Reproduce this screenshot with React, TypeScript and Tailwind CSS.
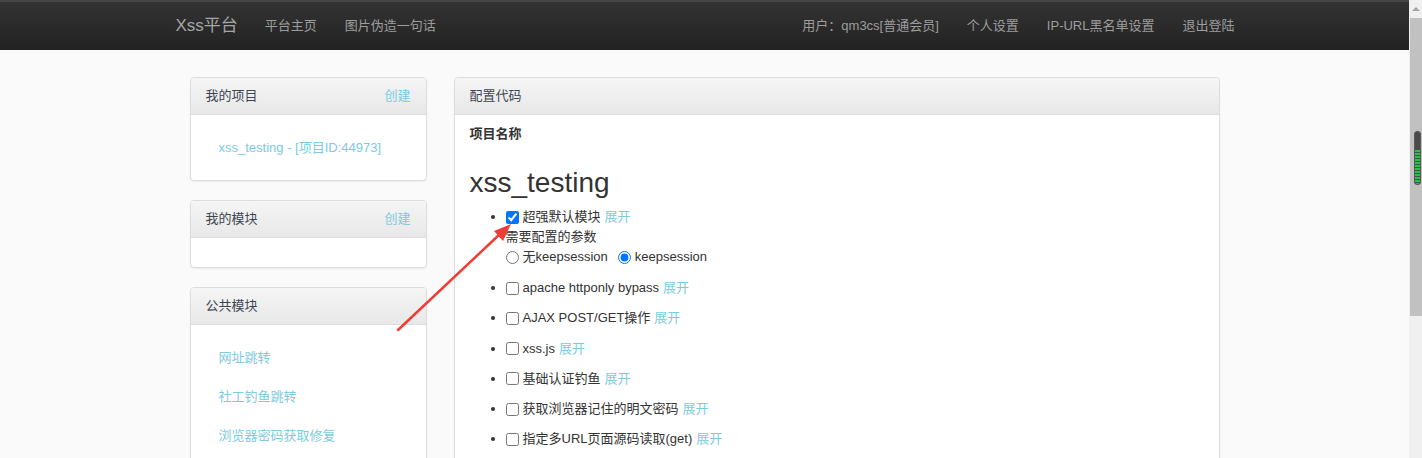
import React from "react";

const FONT = '"Liberation Sans", "Noto Sans CJK SC", sans-serif';

function Panel({ title, action, children }: { title: string; action?: string; children?: React.ReactNode }) {
  return (
    <div className="border border-[#dddddd] rounded-[4px] bg-white shadow-[0_1px_2px_rgba(0,0,0,0.06)] overflow-hidden">
      <div className="h-[37px] px-[15px] flex items-center justify-between border-b border-[#dddddd] bg-[linear-gradient(to_bottom,#f5f5f5_0%,#e8e8e8_100%)]">
        <span className="text-[13px] text-[#3d4650]">{title}</span>
        {action && <span className="text-[13px] text-[#7ccbe0]">{action}</span>}
      </div>
      {children}
    </div>
  );
}

function Item({ label }: { label: string }) {
  return (
    <li className="mb-[10.25px] leading-[20px]">
      <span className="inline-flex items-center align-top">
        <input type="checkbox" className="m-0 mr-[4px] w-[13px] h-[13px] accent-[#0075ff]" />
        <span>{label}</span>
        <span className="ml-[4px] text-[#7ccbe0]">展开</span>
      </span>
    </li>
  );
}

function Scrollbar() {
  return (
    <div className="w-[13px] h-[458px] bg-[#f0f0f0] flex flex-col">
      <div className="h-[18px] flex items-center justify-center pl-[1px]">
        <div className="w-0 h-0 border-l-[4px] border-r-[4px] border-b-[4px] border-l-transparent border-r-transparent border-b-[#a3a3a3]" />
      </div>
      <div className="ml-[1px] h-[298px] bg-[#c1c1c1] pt-[113px] pl-[4px]">
        <div className="w-[7px] h-[54px] rounded-[3px] bg-[#4a4a4a] border border-[#5a5a5a] overflow-hidden flex flex-col">
          <div className="h-[18px]" />
          <div className="flex-1 bg-[repeating-linear-gradient(to_bottom,#27c04a_0px,#27c04a_2px,#3a5a3f_2px,#3a5a3f_3px)]" />
        </div>
      </div>
    </div>
  );
}

export default function App() {
  return (
    <div className="flex w-[1422px] h-[458px] overflow-hidden" style={{ fontFamily: FONT }}>
      <div className="relative w-[1409px] h-[458px] bg-[#fafafa] overflow-hidden">
        {/* navbar */}
        <div className="h-[50px] border-t-[2px] border-[#474747] bg-[linear-gradient(to_bottom,#333333_0%,#222222_100%)]">
          <div className="w-[1088px] mx-auto h-full flex items-center text-[#9d9d9d]">
            <span className="pl-[15px] pr-[13px] text-[17px] text-[#a5a5a5]">Xss平台</span>
            <span className="px-[14px] text-[13px]">平台主页</span>
            <span className="px-[14px] text-[13px]">图片伪造一句话</span>
            <div className="ml-auto flex items-center text-[13px]">
              <span className="px-[14px]">用户：qm3cs[普通会员]</span>
              <span className="px-[14px]">个人设置</span>
              <span className="px-[14px]">IP-URL黑名单设置</span>
              <span className="px-[14px]">退出登陆</span>
            </div>
          </div>
        </div>

        {/* content */}
        <div className="w-[1030px] mx-auto mt-[27px] flex gap-[27px] items-start">
          <div className="w-[237px] flex flex-col gap-[19px] shrink-0">
            <Panel title="我的项目" action="创建">
              <div className="h-[65px] flex items-center pl-[28px] text-[13px] text-[#7ccbe0]">
                xss_testing - [项目ID:44973]
              </div>
            </Panel>
            <Panel title="我的模块" action="创建">
              <div className="h-[29px]" />
            </Panel>
            <Panel title="公共模块">
              <div className="pt-[23px] pl-[28px] pb-[40px] flex flex-col gap-[19px] text-[13px] text-[#7ccbe0] leading-[20px]">
                <span>网址跳转</span>
                <span>社工钓鱼跳转</span>
                <span>浏览器密码获取修复</span>
              </div>
            </Panel>
          </div>

          <div className="w-[766px] shrink-0">
            <Panel title="配置代码">
              <div className="px-[15px] pt-[9px] pb-[40px] text-[13px] text-[#333333]">
                <div className="font-bold leading-[20px]">项目名称</div>
                <div className="mt-[23px] text-[28px] leading-[31px] text-[#333333]">xss_testing</div>
                <ul className="mt-[9px] pl-[36px] list-disc">
                  <li className="mb-[11px] leading-[20px]">
                    <span className="inline-flex items-center align-top">
                      <input type="checkbox" defaultChecked className="m-0 mr-[4px] w-[13px] h-[13px] accent-[#0075ff]" />
                      <span>超强默认模块</span>
                      <span className="ml-[4px] text-[#7ccbe0]">展开</span>
                    </span>
                    <div className="leading-[19px]">需要配置的参数</div>
                    <div className="mt-[1px] flex items-center leading-[20px]">
                      <input type="radio" name="ks" className="m-0 mr-[4px] w-[13px] h-[13px] accent-[#0075ff]" />
                      <span>无keepsession</span>
                      <input type="radio" name="ks" defaultChecked className="m-0 ml-[10px] mr-[4px] w-[13px] h-[13px] accent-[#0075ff]" />
                      <span>keepsession</span>
                    </div>
                  </li>
                  <Item label="apache httponly bypass" />
                  <Item label="AJAX POST/GET操作" />
                  <Item label="xss.js" />
                  <Item label="基础认证钓鱼" />
                  <Item label="获取浏览器记住的明文密码" />
                  <Item label="指定多URL页面源码读取(get)" />
                </ul>
              </div>
            </Panel>
          </div>
        </div>

        {/* red annotation arrow */}
        <svg className="absolute inset-0 pointer-events-none" width="1409" height="458">
          <line x1="398" y1="330" x2="500" y2="234" stroke="#f03c36" strokeWidth="2.5" strokeLinecap="round" />
          <polygon points="511,224 494,231 503,241" fill="#f03c36" />
        </svg>
      </div>
      <Scrollbar />
    </div>
  );
}
